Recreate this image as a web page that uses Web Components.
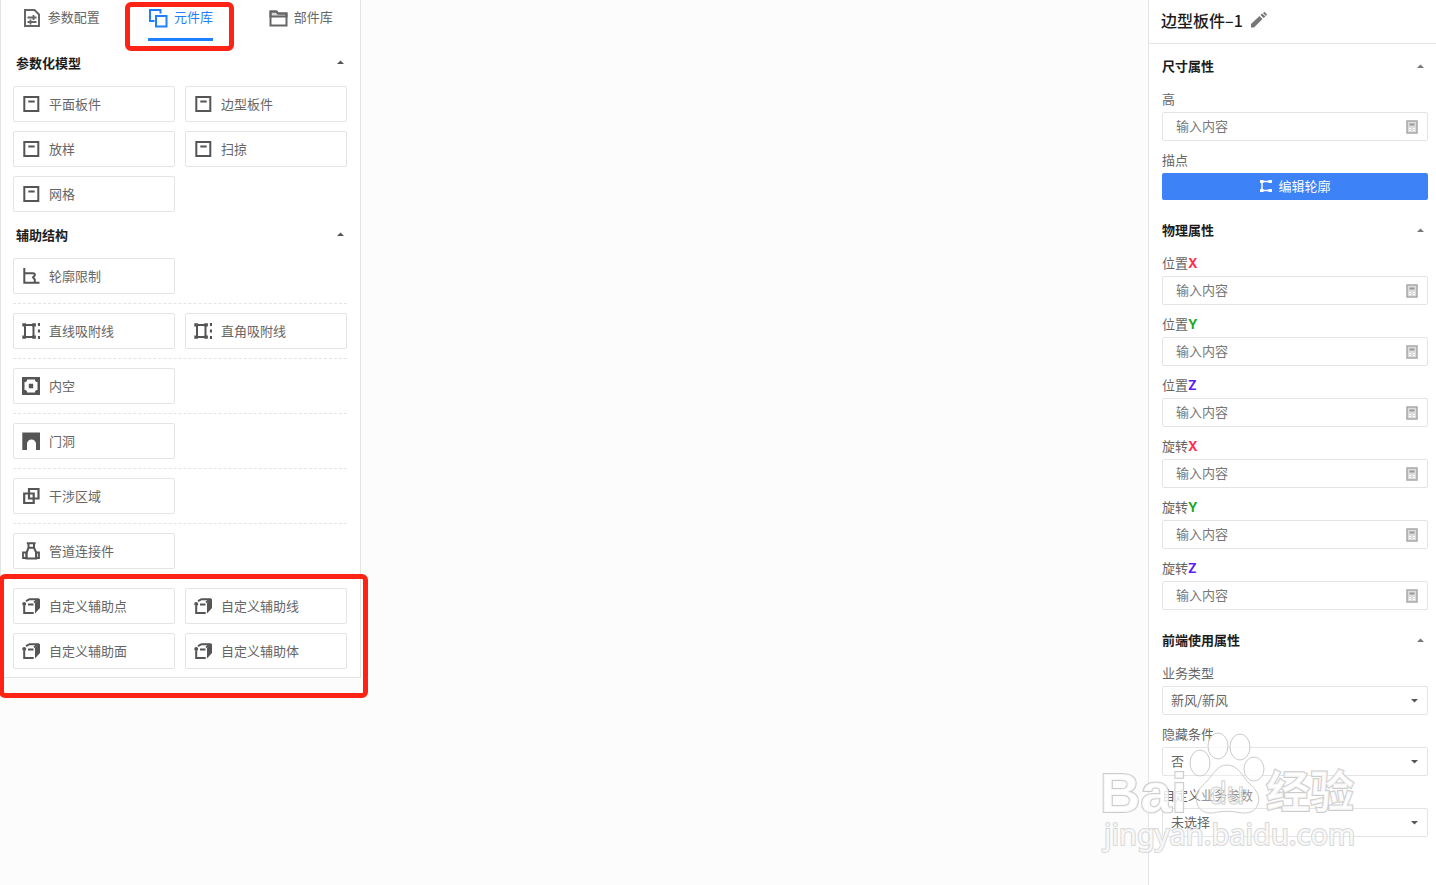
<!DOCTYPE html>
<html lang="zh-CN">
<head>
<meta charset="utf-8">
<title>元件库</title>
<style>
    html {
        font-family: "Noto Sans CJK SC", "Noto Sans", sans-serif;
        font-size: 13px;
        color: #666;
        --line: #e4e4e4;
        --dark: #1c1c1c;
        --blue: #1f80ff;
        --red: #ff2315;
    }
    body {
        margin: 0;
        background: #fcfcfc;
    }
</style>
</head>
<body>
<editor-app>
    <library-panel slot="left">
        <panel-tab slot="tabs" icon="config">参数配置</panel-tab>
        <panel-tab slot="tabs" icon="library" active marked>元件库</panel-tab>
        <panel-tab slot="tabs" icon="folder">部件库</panel-tab>

        <tool-section heading="参数化模型">
            <tool-group>
                <tool-item icon="board">平面板件</tool-item>
                <tool-item icon="board">边型板件</tool-item>
                <tool-item icon="board">放样</tool-item>
                <tool-item icon="board">扫掠</tool-item>
                <tool-item icon="board">网格</tool-item>
            </tool-group>
        </tool-section>
        <tool-section heading="辅助结构">
            <tool-group><tool-item icon="limit">轮廓限制</tool-item></tool-group>
            <tool-group divided>
                <tool-item icon="snap">直线吸附线</tool-item>
                <tool-item icon="snap">直角吸附线</tool-item>
            </tool-group>
            <tool-group divided><tool-item icon="inner">内空</tool-item></tool-group>
            <tool-group divided><tool-item icon="door">门洞</tool-item></tool-group>
            <tool-group divided><tool-item icon="overlap">干涉区域</tool-item></tool-group>
            <tool-group divided><tool-item icon="pipe">管道连接件</tool-item></tool-group>
            <tool-group divided marked>
                <tool-item icon="cube">自定义辅助点</tool-item>
                <tool-item icon="cube">自定义辅助线</tool-item>
                <tool-item icon="cube">自定义辅助面</tool-item>
                <tool-item icon="cube">自定义辅助体</tool-item>
            </tool-group>
        </tool-section>
    </library-panel>

    <property-panel slot="right" heading="边型板件–1">
        <property-section heading="尺寸属性">
            <text-field label="高"></text-field>
            <button-field label="描点">编辑轮廓</button-field>
        </property-section>
        <property-section heading="物理属性">
            <text-field label="位置" axis="X"></text-field>
            <text-field label="位置" axis="Y"></text-field>
            <text-field label="位置" axis="Z"></text-field>
            <text-field label="旋转" axis="X"></text-field>
            <text-field label="旋转" axis="Y"></text-field>
            <text-field label="旋转" axis="Z"></text-field>
        </property-section>
        <property-section heading="前端使用属性">
            <select-field label="业务类型" value="新风/新风"></select-field>
            <select-field label="隐藏条件" value="否"></select-field>
            <select-field label="自定义业务参数" value="未选择"></select-field>
        </property-section>
    </property-panel>
    <water-mark slot="overlay"></water-mark>
</editor-app>

<script>
const ICONS = {
    config: [20, `<path d="M3 2h9.500l4.500 4.500v11.500h-14z"/><path d="M5.500 9.500h9M5.500 14h9M11.500 7v5M8.500 11.500v5" stroke-width="1.800"/>`],
    library: [20, `<path d="M6.500 13H2V2h10.500v3.500"/><path d="M8 8h10.500v10.500H8z"/>`],
    folder: [20, `<path d="M2.500 17.500v-14h6l1.500 2h8.500v12z"/><path d="M2.500 3.500h6l1.500 2h8.500v3h-16z" fill="currentColor" fill-opacity=".25"/>`],
    board: [18, `<path d="M2.300 2h14v14h-14zM6.300 6.500h6.400"/>`],
    limit: [18, `<path d="M2.300 1v14.700H17.500M2.300 6.300h8.500q2.500 0 2 2L11 10.300l1.800 2.200v3"/>`],
    snap: [18, `<path d="M3 3h8.500v12H3z"/><path d="M.300 1.200h3.700v3.300H.300zM10.200 1.200h3.700v3.300h-3.700zM.300 13.500h3.700v3.300H.300zM10.200 13.500h3.700v3.300h-3.700z" fill="currentColor" stroke="none"/><path d="M17 1v3M17 7.500v3M17 14v3" stroke-width="2.200"/>`],
    inner: [18, `<path fill="currentColor" stroke="none" fill-rule="evenodd" d="M0 0h18v18H0zM5 2.500v1.200l-1.300 1.300H2.500v8h1.200L5 14.300v1.200h8v-1.200l1.300-1.300h1.200V5h-1.200L13 3.700V2.500zM6.800 6.800h4.400v4.400H6.800z"/>`],
    door: [18, `<path fill="currentColor" stroke="none" d="M.300.500h17.700v17.500h-4v-6a4.500 4.500 0 0 0-9 0v6H.300z"/>`],
    overlap: [18, `<path d="M2.200 6.500h9.500v9.500H2.200zM7 2h9.500v9.500H7z" stroke-width="2.200"/>`],
    pipe: [18, `<path d="M4.800 1.200h8.800M6.500 1.500v4.500M12 1.500v4.500M6.500 5.800h5.500l2.300 5v5.700H4.500v-5.700z"/><path d="M1 10.500h3.500v5.500H1zM14 10.500h3v5.500h-3z" stroke-width="1.800"/>`],
    cube: [18, `<path d="M4 4.200l3.500-2H17M2.200 9v7h9.500M6 7.500h5.500M12 5.500l4-3"/><circle cx="2.200" cy="7" r="2" fill="currentColor" stroke="none"/><path fill="currentColor" stroke="none" d="M13 6L18 1.500v9.500l-5 5.500z"/>`],
    pencil: [18, `<path fill="currentColor" stroke="none" d="M1 16.500v-3.500L9.500 5l3 3-8.500 8.500zM10.500 4l1.500-1.500 3.500 3L13.500 7zM13 2l1.500-1.300L17 3.500 16 5z"/>`],
    calc: [14, `<path fill="#dcdcdc" stroke="#a8a8a8" stroke-width="1.500" d="M2 1h10v12H2z"/><path stroke="#999" d="M4.500 4.500h5"/><path stroke="#fff" stroke-width="1" d="M4 8.500h2M8 8.500h2M4 10.500h2M8 10.500h2"/>`],
    outline: [14, `<path stroke-width="1.500" d="M11.500 2.500h-8.500v9h8.500"/><path fill="currentColor" stroke="none" d="M1 1h3.500v3H1zM9.500 1H13v3H9.500zM1 10h3.500v3H1zM9.500 10H13v3H9.500z"/>`],
    up: [7, `<path fill="currentColor" stroke="none" d="M0 5l3.500-3.500L7 5z"/>`],
    down: [7, `<path fill="currentColor" stroke="none" d="M0 2l3.500 3.500L7 2z"/>`]
};

// base for everything: css + html in an open shadow root
class BaseElement extends HTMLElement {
    constructor() {
        super();
        this.attachShadow({mode: "open"});
    }
    connectedCallback() {
        this.shadowRoot.innerHTML = `<style>
            * { box-sizing: border-box; }
            button, input, select { font: inherit; color: inherit; margin: 0; }
            ${this.css()}
        </style>${this.html()}`;
    }
    attr(name) {
        return this.getAttribute(name) || "";
    }
    css() { return ""; }
    html() { return "<slot></slot>"; }
}

class UiIcon extends BaseElement {
    css() {
        return `
            :host { display: block; flex: none; }
            svg { display: block; }
        `;
    }
    html() {
        const [size, shape] = ICONS[this.attr("name")];
        return `<svg width="${size}" height="${size}" viewBox="0 0 ${size} ${size}" fill="none"
            stroke="currentColor" stroke-width="2" aria-hidden="true">${shape}</svg>`;
    }
}

class EditorApp extends BaseElement {
    css() {
        return `
            :host { display: flex; position: relative; min-height: 100vh; align-items: flex-start; }
            main { flex: 1; }
            slot[name="right"] { display: flex; align-self: stretch; }
        `;
    }
    html() {
        return `<slot name="left"></slot><main></main><slot name="right"></slot><slot name="overlay"></slot>`;
    }
}

// red frame drawn around a part of the page, its parent sets the inset
class MarkFrame extends BaseElement {
    css() {
        return `:host { position: absolute; border: 5px solid var(--red); border-radius: 6px; pointer-events: none; box-sizing: border-box; z-index: 1; }`;
    }
    html() { return ""; }
}

class LibraryPanel extends BaseElement {
    css() {
        return `
            :host { display: block; box-sizing: border-box; width: 361px; padding-bottom: 7px; background: #fff; border: 1px solid var(--line); border-top: 0; }
            nav { display: grid; grid-template-columns: repeat(3, 1fr); }
        `;
    }
    html() {
        return `<nav><slot name="tabs"></slot></nav><slot></slot>`;
    }
}

class PanelTab extends BaseElement {
    css() {
        return `
            :host { display: flex; justify-content: center; position: relative; }
            a { display: flex; align-items: center; gap: 6px; height: 41px; padding-bottom: 3px; border-bottom: 3px solid transparent; color: #666; text-decoration: none; }
            :host([active]) a { color: var(--blue); border-color: var(--blue); }
            span { padding-bottom: 2px; }
            mark-frame { inset: 2px 6px -10px 4px; }
        `;
    }
    html() {
        return `<a href="#"><ui-icon name="${this.attr("icon")}"></ui-icon><span><slot></slot></span></a>
            ${this.hasAttribute("marked") ? "<mark-frame></mark-frame>" : ""}`;
    }
}

class ToolSection extends BaseElement {
    css() {
        return `
            :host { display: block; padding: 0 13px 1px 12px; }
            h2 { margin: 0; font-size: 13px; }
            button { display: flex; justify-content: space-between; align-items: center; width: 100%; height: 45px; padding: 0 3px 2px; border: 0; background: none; font-weight: 700; color: var(--dark); }
            ui-icon { color: #555; }
        `;
    }
    html() {
        return `<h2><button>${this.attr("heading")}<ui-icon name="up"></ui-icon></button></h2><slot></slot>`;
    }
}

class ToolGroup extends BaseElement {
    css() {
        return `
            :host { display: block; position: relative; }
            :host([divided]) { margin-top: 9px; border-top: 1px dashed var(--line); padding-top: 9px; }
            .grid { display: grid; grid-template-columns: 1fr 1fr; gap: 9px 10px; }
            mark-frame { inset: -5px -21px -29px -14px; }
        `;
    }
    html() {
        return `<div class="grid"><slot></slot></div>
            ${this.hasAttribute("marked") ? "<mark-frame></mark-frame>" : ""}`;
    }
}

class ToolItem extends BaseElement {
    css() {
        return `
            :host { display: block; }
            button { display: flex; align-items: center; gap: 9px; width: 100%; height: 36px; padding: 0 8px; background: #fff; border: 1px solid var(--line); border-radius: 2px; }
            span { padding-bottom: 2px; }
            ui-icon { color: #555; }
        `;
    }
    html() {
        return `<button><ui-icon name="${this.attr("icon")}"></ui-icon><span><slot></slot></span></button>`;
    }
}

class PropertyPanel extends BaseElement {
    css() {
        return `
            :host { display: block; box-sizing: border-box; width: 288px; background: #fff; border-left: 1px solid var(--line); }
            header { display: flex; align-items: center; gap: 7px; height: 44px; padding: 0 12px 4px; border-bottom: 1px solid var(--line); }
            h1 { margin: 0; font-size: 16px; font-weight: 500; color: var(--dark); }
            button { padding: 0; border: 0; background: none; color: #777; }
            .body { padding: 8px 8px 0 13px; }
        `;
    }
    html() {
        return `<header><h1>${this.attr("heading")}</h1>
            <button aria-label="重命名"><ui-icon name="pencil"></ui-icon></button></header>
            <div class="body"><slot></slot></div>`;
    }
}

class PropertySection extends BaseElement {
    css() {
        return `
            :host { display: block; padding-bottom: 16px; }
            h2 { margin: 0; font-size: 13px; }
            button { display: flex; justify-content: space-between; align-items: center; width: 100%; height: 28px; padding: 0 4px 0 0; border: 0; background: none; font-weight: 700; color: var(--dark); }
            span { padding-bottom: 2px; }
            ui-icon { color: #777; }
        `;
    }
    html() {
        return `<h2><button><span>${this.attr("heading")}</span><ui-icon name="up"></ui-icon></button></h2><slot></slot>`;
    }
}

class BaseField extends BaseElement {
    css() {
        return `
            :host { display: block; }
            label { display: block; height: 26px; margin-top: 6px; line-height: 26px; }
            b { font-family: Inter, sans-serif; }
            .X { color: #ff2d4b; }
            .Y { color: #17a81a; }
            .Z { color: #5a1bf0; }
            .box { display: flex; align-items: center; height: 29px; background: #fff; border: 1px solid var(--line); border-radius: 2px; }
        `;
    }
    html() {
        const axis = this.attr("axis");
        return `<label for="control">${this.attr("label")}${axis ? `<b class="${axis}">${axis}</b>` : ""}</label>${this.control()}`;
    }
}

class TextField extends BaseField {
    css() {
        return super.css() + `
            .box { padding: 0 8px 0 13px; }
            input { flex: 1; min-width: 0; padding: 0 0 2px; border: 0; outline: 0; background: none; }
            input::placeholder { color: #777; opacity: 1; }
        `;
    }
    control() {
        return `<div class="box"><input id="control" type="text" placeholder="输入内容"><ui-icon name="calc"></ui-icon></div>`;
    }
}

class SelectField extends BaseField {
    css() {
        return super.css() + `
            .box { display: grid; align-items: center; }
            select, ui-icon { grid-area: 1 / 1; }
            select { appearance: none; width: 100%; height: 27px; padding: 0 8px 2px; border: 0; outline: 0; background: none; }
            ui-icon { justify-self: end; margin-right: 9px; color: #555; pointer-events: none; }
        `;
    }
    control() {
        return `<div class="box"><select id="control"><option>${this.attr("value")}</option></select><ui-icon name="down"></ui-icon></div>`;
    }
}

class ButtonField extends BaseField {
    css() {
        return super.css() + `
            button { display: flex; justify-content: center; align-items: center; gap: 5px; width: 100%; height: 27px; padding: 0 0 2px; border: 0; border-radius: 2px; background: #3d82f7; color: #fff; }
        `;
    }
    control() {
        return `<button id="control"><ui-icon name="outline"></ui-icon><slot></slot></button>`;
    }
}

class WaterMark extends BaseElement {
    css() {
        return `
            :host { position: absolute; top: 728px; right: 74px; pointer-events: none; }
            svg { display: block; overflow: visible; }
            g { fill: #fff; fill-opacity: .8; stroke: #ccc; stroke-width: 1; }
            .pad { fill-opacity: .3; }
            text { paint-order: stroke; stroke-width: 2; }
            .latin { font: 700 56px "Liberation Sans", sans-serif; }
            .du { font: 400 32px "Liberation Sans", sans-serif; fill-opacity: .3; stroke-width: 1; }
            .han { font: 700 44px "Noto Sans CJK SC", sans-serif; }
            .url { font: 400 29px "Noto Sans", sans-serif; stroke: #d8d8d8; }
        `;
    }
    html() {
        return `<svg width="262" height="128" viewBox="0 0 262 128">
            <g>
                <ellipse cx="118" cy="18" rx="10" ry="13"/>
                <ellipse cx="140" cy="19" rx="10" ry="13"/>
                <ellipse cx="100" cy="35" rx="10" ry="13"/>
                <ellipse cx="154" cy="41" rx="10" ry="12"/>
                <path class="pad" d="M127 37c-10 0-13 9-20 16-6 6-13 12-10 22 3 11 14 11 21 9 6-1 12-1 18 0 8 2 19 2 22-8 3-9-3-15-9-21-7-7-11-18-22-18z"/>
                <text class="latin" x="0" y="84">Bai</text>
                <text class="du" x="109" y="76">du</text>
                <text class="han" x="166" y="80">经验</text>
                <text class="url" x="4" y="117">jingyan.baidu.com</text>
            </g>
        </svg>`;
    }
}

customElements.define("ui-icon", UiIcon);
customElements.define("mark-frame", MarkFrame);
customElements.define("editor-app", EditorApp);
customElements.define("library-panel", LibraryPanel);
customElements.define("panel-tab", PanelTab);
customElements.define("tool-section", ToolSection);
customElements.define("tool-group", ToolGroup);
customElements.define("tool-item", ToolItem);
customElements.define("property-panel", PropertyPanel);
customElements.define("property-section", PropertySection);
customElements.define("text-field", TextField);
customElements.define("select-field", SelectField);
customElements.define("button-field", ButtonField);
customElements.define("water-mark", WaterMark);
</script>
</body>
</html>
